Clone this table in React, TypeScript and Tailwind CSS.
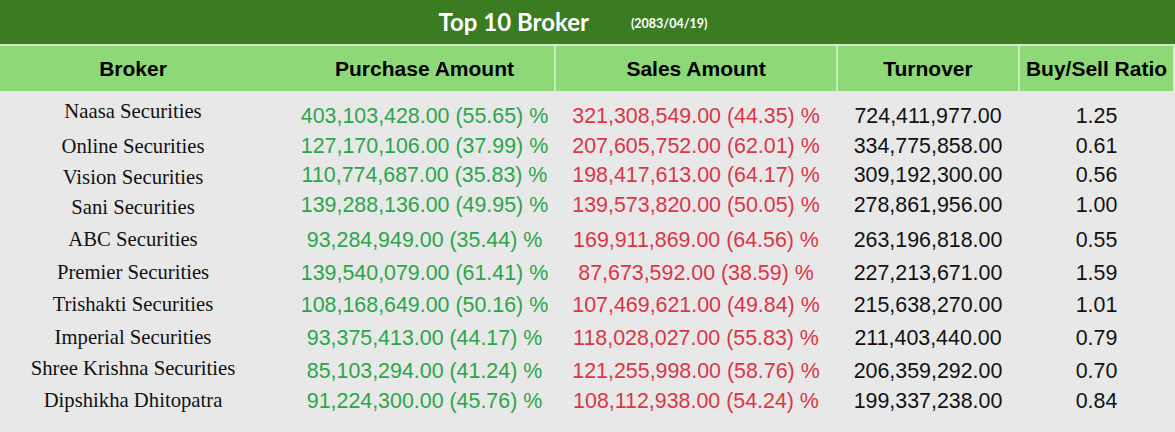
import React from "react";

type Row = {
  name: string;
  buy: string;
  sell: string;
  turnover: string;
  ratio: string;
  rowCls: string;
  nameCls: string;
};

const rows: Row[] = [
  { name: "Naasa Securities", buy: "403,103,428.00 (55.65) %", sell: "321,308,549.00 (44.35) %", turnover: "724,411,977.00", ratio: "1.25", rowCls: "mt-[13px]", nameCls: "pb-[10px]" },
  { name: "Online Securities", buy: "127,170,106.00 (37.99) %", sell: "207,605,752.00 (62.01) %", turnover: "334,775,858.00", ratio: "0.61", rowCls: "mt-[6px]", nameCls: "" },
  { name: "Vision Securities", buy: "110,774,687.00 (35.83) %", sell: "198,417,613.00 (64.17) %", turnover: "309,192,300.00", ratio: "0.56", rowCls: "mt-[5px]", nameCls: "pt-[4px]" },
  { name: "Sani Securities", buy: "139,288,136.00 (49.95) %", sell: "139,573,820.00 (50.05) %", turnover: "278,861,956.00", ratio: "1.00", rowCls: "mt-[6px]", nameCls: "pt-[4px]" },
  { name: "ABC Securities", buy: "93,284,949.00 (35.44) %", sell: "169,911,869.00 (64.56) %", turnover: "263,196,818.00", ratio: "0.55", rowCls: "mt-[11px]", nameCls: "pb-[2px]" },
  { name: "Premier Securities", buy: "139,540,079.00 (61.41) %", sell: "87,673,592.00 (38.59) %", turnover: "227,213,671.00", ratio: "1.59", rowCls: "mt-[9px]", nameCls: "pb-[3px]" },
  { name: "Trishakti Securities", buy: "108,168,649.00 (50.16) %", sell: "107,469,621.00 (49.84) %", turnover: "215,638,270.00", ratio: "1.01", rowCls: "mt-[8px]", nameCls: "pb-[3px]" },
  { name: "Imperial Securities", buy: "93,375,413.00 (44.17) %", sell: "118,028,027.00 (55.83) %", turnover: "211,403,440.00", ratio: "0.79", rowCls: "mt-[9px]", nameCls: "pb-[3px]" },
  { name: "Shree Krishna Securities", buy: "85,103,294.00 (41.24) %", sell: "121,255,998.00 (58.76) %", turnover: "206,359,292.00", ratio: "0.70", rowCls: "mt-[9px]", nameCls: "pb-[6px]" },
  { name: "Dipshikha Dhitopatra", buy: "91,224,300.00 (45.76) %", sell: "108,112,938.00 (54.24) %", turnover: "199,337,238.00", ratio: "0.84", rowCls: "mt-[6px]", nameCls: "pb-[3px]" },
];

const sans = "font-['Liberation_Sans',Arial,sans-serif]";
const serif = "font-['Liberation_Serif','Times_New_Roman',serif]";

export default function App() {
  return (
    <div className="w-[1175px] h-[432px] bg-[#e8e8e8] overflow-hidden">
      {/* Title bar */}
      <div className="h-[44px] bg-[#3b7b22] flex items-center justify-center pr-[29px] font-['Lato',sans-serif] font-bold text-white">
        <span className="text-[24px] leading-none">Top 10 Broker</span>
        <span className="text-[12.5px] leading-none ml-[42px] mt-[4px]">(2083/04/19)</span>
      </div>
      <div className="h-[2px] bg-[#d3e6cb]" />
      {/* Header */}
      <div className={`h-[45px] bg-[#8ed977] flex text-black font-bold text-[21px] ${sans}`}>
        <div className="w-[295px] pr-[29px] flex items-center justify-center">Broker</div>
        <div className="w-[259px] flex items-center justify-center">Purchase Amount</div>
        <div className="w-[282px] border-l-2 border-[#c9ecbc] flex items-center justify-center">Sales Amount</div>
        <div className="w-[182px] border-l-2 border-[#c9ecbc] flex items-center justify-center">Turnover</div>
        <div className="w-[155px] border-l-2 border-[#c9ecbc] flex items-center justify-center">Buy/Sell Ratio</div>
        <div className="w-[2px] bg-[#dfe9da]" />
      </div>
      {/* Body */}
      <div className="flex flex-col">
        {rows.map((r) => (
          <div key={r.name} className={`h-[24px] flex items-center ${r.rowCls}`}>
            <div className={`w-[295px] pr-[29px] flex justify-center text-[20.7px] leading-[24px] text-[#111] whitespace-nowrap ${serif} ${r.nameCls}`}>
              {r.name}
            </div>
            <div className={`w-[259px] flex justify-center text-[21.4px] leading-[24px] text-[#2aa64a] whitespace-nowrap ${sans}`}>
              {r.buy}
            </div>
            <div className={`w-[282px] pl-[2px] flex justify-center text-[21.4px] leading-[24px] text-[#dc3545] whitespace-nowrap ${sans}`}>
              {r.sell}
            </div>
            <div className={`w-[182px] pl-[2px] flex justify-center text-[21.4px] leading-[24px] text-[#111] whitespace-nowrap ${sans}`}>
              {r.turnover}
            </div>
            <div className={`w-[155px] pl-[2px] flex justify-center text-[21.4px] leading-[24px] text-[#111] whitespace-nowrap ${sans}`}>
              {r.ratio}
            </div>
          </div>
        ))}
      </div>
    </div>
  );
}
